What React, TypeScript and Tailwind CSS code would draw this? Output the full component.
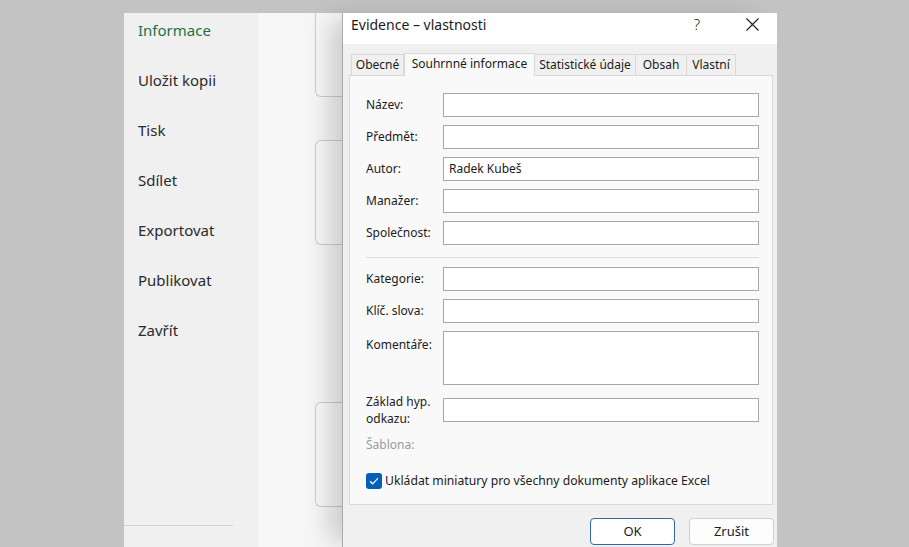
import React from 'react';

const menu = ['Informace', 'Uložit kopii', 'Tisk', 'Sdílet', 'Exportovat', 'Publikovat', 'Zavřít'];

const tabs = [
  { label: 'Obecné', w: 'w-[53px]' },
  { label: 'Souhrnné informace', w: 'w-[131px]', active: true },
  { label: 'Statistické údaje', w: 'w-[101px]' },
  { label: 'Obsah', w: 'w-[51px]' },
  { label: 'Vlastní', w: 'w-[49px]' },
];

function Field({ label, value }: { label: string; value?: string }) {
  return (
    <div className="flex items-center h-[24px]">
      <span className="w-[77px] shrink-0">{label}</span>
      <div className="flex-1 h-[24px] bg-white border border-[#a7a7a7] flex items-center pl-[5px]">{value}</div>
    </div>
  );
}

export default function App() {
  return (
    <div className="w-[909px] h-[547px] overflow-hidden bg-[#c3c3c3] pl-[124px] pt-[13px] font-['Noto_Sans',sans-serif] text-[#1b1b1b]">
      <div className="flex h-[534px]">
        {/* backstage menu */}
        <aside className="w-[134px] shrink-0 bg-[#f0f0f0] flex flex-col">
          <nav className="flex flex-col gap-[16px] pl-[14px] text-[15px] text-[#2b2b2b]">
            {menu.map((m, i) => (
              <div key={m} className={`h-[34px] flex items-center ${i === 0 ? 'text-[#1e7145]' : ''}`}>
                {m}
              </div>
            ))}
          </nav>
          <div className="mt-auto mb-[21px] w-[109px] h-px bg-[#d2d2d2]" />
        </aside>

        {/* info pane behind the dialog */}
        <div className="w-[84px] shrink-0 bg-[#f6f6f6] overflow-hidden pl-[57px] flex flex-col">
          <div className="h-[84px] w-[60px] shrink-0 bg-[#f8f8f8] border border-t-0 border-r-0 border-[#cdcdcd] rounded-bl-[6px]" />
          <div className="mt-[43px] h-[105px] w-[60px] shrink-0 bg-[#f8f8f8] border border-r-0 border-[#cdcdcd] rounded-l-[6px]" />
          <div className="mt-[157px] h-[105px] w-[60px] shrink-0 bg-[#f8f8f8] border border-r-0 border-[#cdcdcd] rounded-l-[6px]" />
        </div>

        {/* dialog */}
        <div className="w-[435px] shrink-0 bg-[#f0f0f0] border-l border-[#a9a9a9] flex flex-col text-[12px] shadow-[-18px_0_24px_-6px_rgba(0,0,0,0.18)]">
          <div className="h-[31px] bg-white flex items-center pl-[8px] pb-[8px] text-[14px]">
            <span>Evidence – vlastnosti</span>
            <span className="ml-auto w-[20px] text-center text-[15px] font-light mr-[39px]">?</span>
            <svg width="13" height="13" viewBox="0 0 13 13" className="mr-[18px]">
              <path d="M0.5 0.5 L12.5 12.5 M12.5 0.5 L0.5 12.5" stroke="#1b1b1b" strokeWidth="1.1" />
            </svg>
          </div>

          <div className="flex items-end pl-[8px] pt-[8px] h-[31px]">
            {tabs.map((t) =>
              t.active ? (
                <div
                  key={t.label}
                  className={`${t.w} h-[23px] -mb-px z-10 bg-[#f9f9f9] border border-b-0 border-[#d9d9d9] flex items-center justify-center pb-[2px]`}
                >
                  {t.label}
                </div>
              ) : (
                <div
                  key={t.label}
                  className={`${t.w} h-[21px] bg-[#f0f0f0] border border-l-0 first:border-l border-b-0 border-[#d9d9d9] flex items-center justify-center`}
                >
                  {t.label}
                </div>
              )
            )}
          </div>

          <div className="ml-[6px] w-[424px] h-[430px] bg-[#f9f9f9] border border-[#d9d9d9] pl-[16px] pr-[13px] pt-[17px] flex flex-col">
            <div className="flex flex-col gap-[8px]">
              <Field label="Název:" />
              <Field label="Předmět:" />
              <Field label="Autor:" value="Radek Kubeš" />
              <Field label="Manažer:" />
              <Field label="Společnost:" />
            </div>
            <div className="h-px bg-[#dedede] mt-[12px] mb-[9px]" />
            <div className="flex flex-col gap-[8px]">
              <Field label="Kategorie:" />
              <Field label="Klíč. slova:" />
              <div className="flex items-start">
                <span className="w-[77px] shrink-0 pt-[5px]">Komentáře:</span>
                <div className="flex-1 h-[54px] bg-white border border-[#a7a7a7]" />
              </div>
            </div>
            <div className="flex items-center mt-[8px]">
              <span className="w-[77px] shrink-0 leading-[17px]">
                Základ hyp.
                <br />
                odkazu:
              </span>
              <div className="flex-1 h-[24px] bg-white border border-[#a7a7a7]" />
            </div>
            <div className="mt-[9px] text-[#9b9b9b] leading-[17px]">Šablona:</div>
            <div className="mt-[19px] flex items-center gap-[3px]">
              <span className="w-[16px] h-[16px] rounded-[3px] bg-[#005fb8] flex items-center justify-center">
                <svg width="10" height="8" viewBox="0 0 10 8">
                  <path d="M1 4.2 L3.7 6.8 L9 1.2" fill="none" stroke="white" strokeWidth="1.2" />
                </svg>
              </span>
              <span className="text-[12.2px]">Ukládat miniatury pro všechny dokumenty aplikace Excel</span>
            </div>
          </div>

          <div className="flex justify-end gap-[14px] pr-[3px] mt-[13px]">
            <button className="w-[85px] h-[27px] bg-white border border-[#2f6aa3] rounded-[4px] text-[13px]">OK</button>
            <button className="w-[85px] h-[27px] bg-[#fdfdfd] border border-[#d0d0d0] rounded-[4px] text-[13px]">Zrušit</button>
          </div>
        </div>
      </div>
    </div>
  );
}
